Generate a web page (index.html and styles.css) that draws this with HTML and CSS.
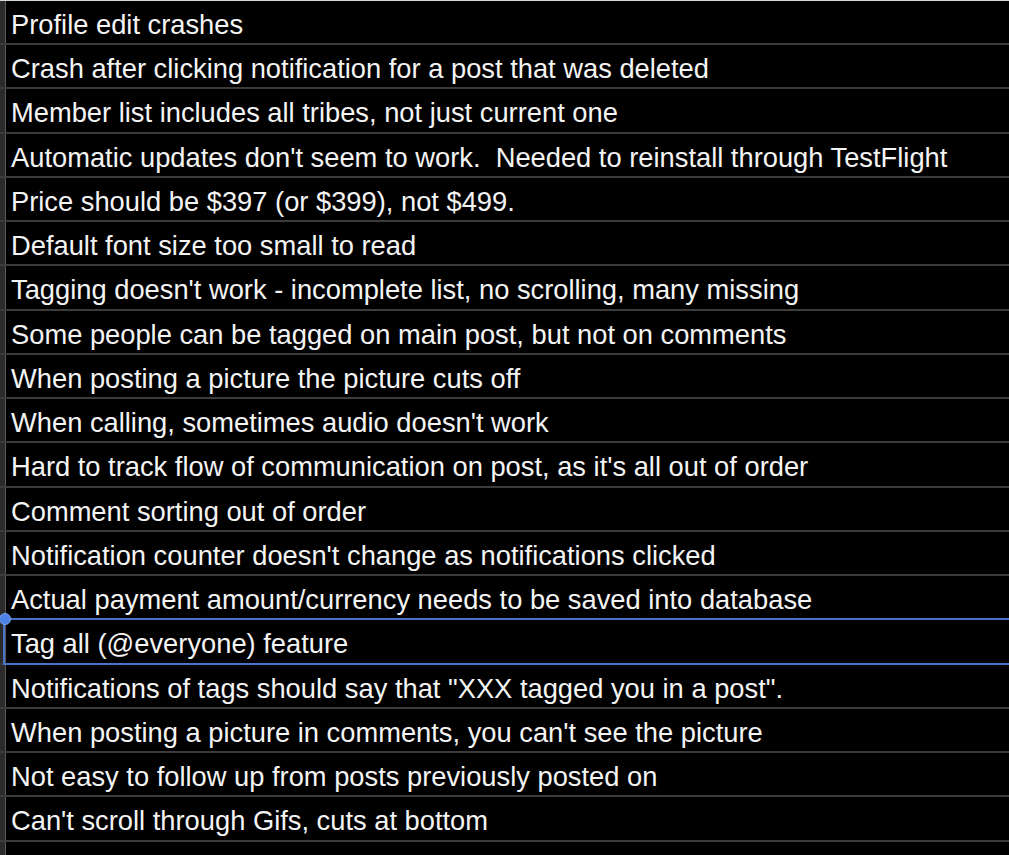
FILE: index.html
```html
<!DOCTYPE html>
<html lang="en">
<head>
<meta charset="utf-8">
<title>Bug list</title>
<link rel="stylesheet" href="styles.css">
</head>
<body>
<div class="sheet">
  <div class="row first"><div class="gutter"></div><div class="cell">Profile edit crashes</div></div>
  <div class="row"><div class="gutter"></div><div class="cell">Crash after clicking notification for a post that was deleted</div></div>
  <div class="row"><div class="gutter"></div><div class="cell">Member list includes all tribes, not just current one</div></div>
  <div class="row"><div class="gutter"></div><div class="cell">Automatic updates don't seem to work.  Needed to reinstall through TestFlight</div></div>
  <div class="row"><div class="gutter"></div><div class="cell">Price should be $397 (or $399), not $499.</div></div>
  <div class="row"><div class="gutter"></div><div class="cell">Default font size too small to read</div></div>
  <div class="row"><div class="gutter"></div><div class="cell">Tagging doesn't work - incomplete list, no scrolling, many missing</div></div>
  <div class="row"><div class="gutter"></div><div class="cell">Some people can be tagged on main post, but not on comments</div></div>
  <div class="row"><div class="gutter"></div><div class="cell">When posting a picture the picture cuts off</div></div>
  <div class="row"><div class="gutter"></div><div class="cell">When calling, sometimes audio doesn't work</div></div>
  <div class="row"><div class="gutter"></div><div class="cell">Hard to track flow of communication on post, as it's all out of order</div></div>
  <div class="row"><div class="gutter"></div><div class="cell">Comment sorting out of order</div></div>
  <div class="row"><div class="gutter"></div><div class="cell">Notification counter doesn't change as notifications clicked</div></div>
  <div class="row"><div class="gutter"></div><div class="cell">Actual payment amount/currency needs to be saved into database</div></div>
  <div class="row selected"><div class="gutter"></div><div class="cell">Tag all (@everyone) feature</div><span class="handle"></span></div>
  <div class="row"><div class="gutter"></div><div class="cell">Notifications of tags should say that "XXX tagged you in a post".</div></div>
  <div class="row"><div class="gutter"></div><div class="cell">When posting a picture in comments, you can't see the picture</div></div>
  <div class="row"><div class="gutter"></div><div class="cell">Not easy to follow up from posts previously posted on</div></div>
  <div class="row"><div class="gutter"></div><div class="cell">Can't scroll through Gifs, cuts at bottom</div></div>
  <div class="row"><div class="gutter"></div><div class="cell">Can't move Gifs</div></div>
</div>
</body>
</html>
```
FILE: styles.css
```css
html, body {
  margin: 0;
  padding: 0;
  background: #000;
  overflow: hidden;
}

.sheet {
  display: flex;
  flex-direction: column;
  border-top: 1.5px solid #d8d8d8;
  font-family: "Liberation Sans", Arial, sans-serif;
  font-size: 27.3px;
  color: #f4f4f4;
}

.row {
  position: relative;
  display: flex;
  height: 42.25px;
  flex: none;
  border-bottom: 2px solid #3c3c3c;
}

.row.first {
  height: 42px;
}

.gutter {
  width: 5px;
  flex: none;
  background: #2b2b2b;
  border-right: 1px solid #5a5a5a;
}

.cell {
  flex: 1;
  padding-left: 5px;
  padding-top: 3px;
  line-height: 42px;
  white-space: pre;
}

.selected::after {
  content: "";
  position: absolute;
  left: 3px;
  right: -4px;
  top: -2px;
  bottom: -2px;
  border: 2px solid #4b72c9;
  pointer-events: none;
}

.handle {
  position: absolute;
  left: -1px;
  top: -7px;
  width: 12px;
  height: 12px;
  border-radius: 50%;
  background: #4d82e6;
  border: 1px solid #7aa4f0;
  box-sizing: border-box;
  z-index: 2;
}
```
